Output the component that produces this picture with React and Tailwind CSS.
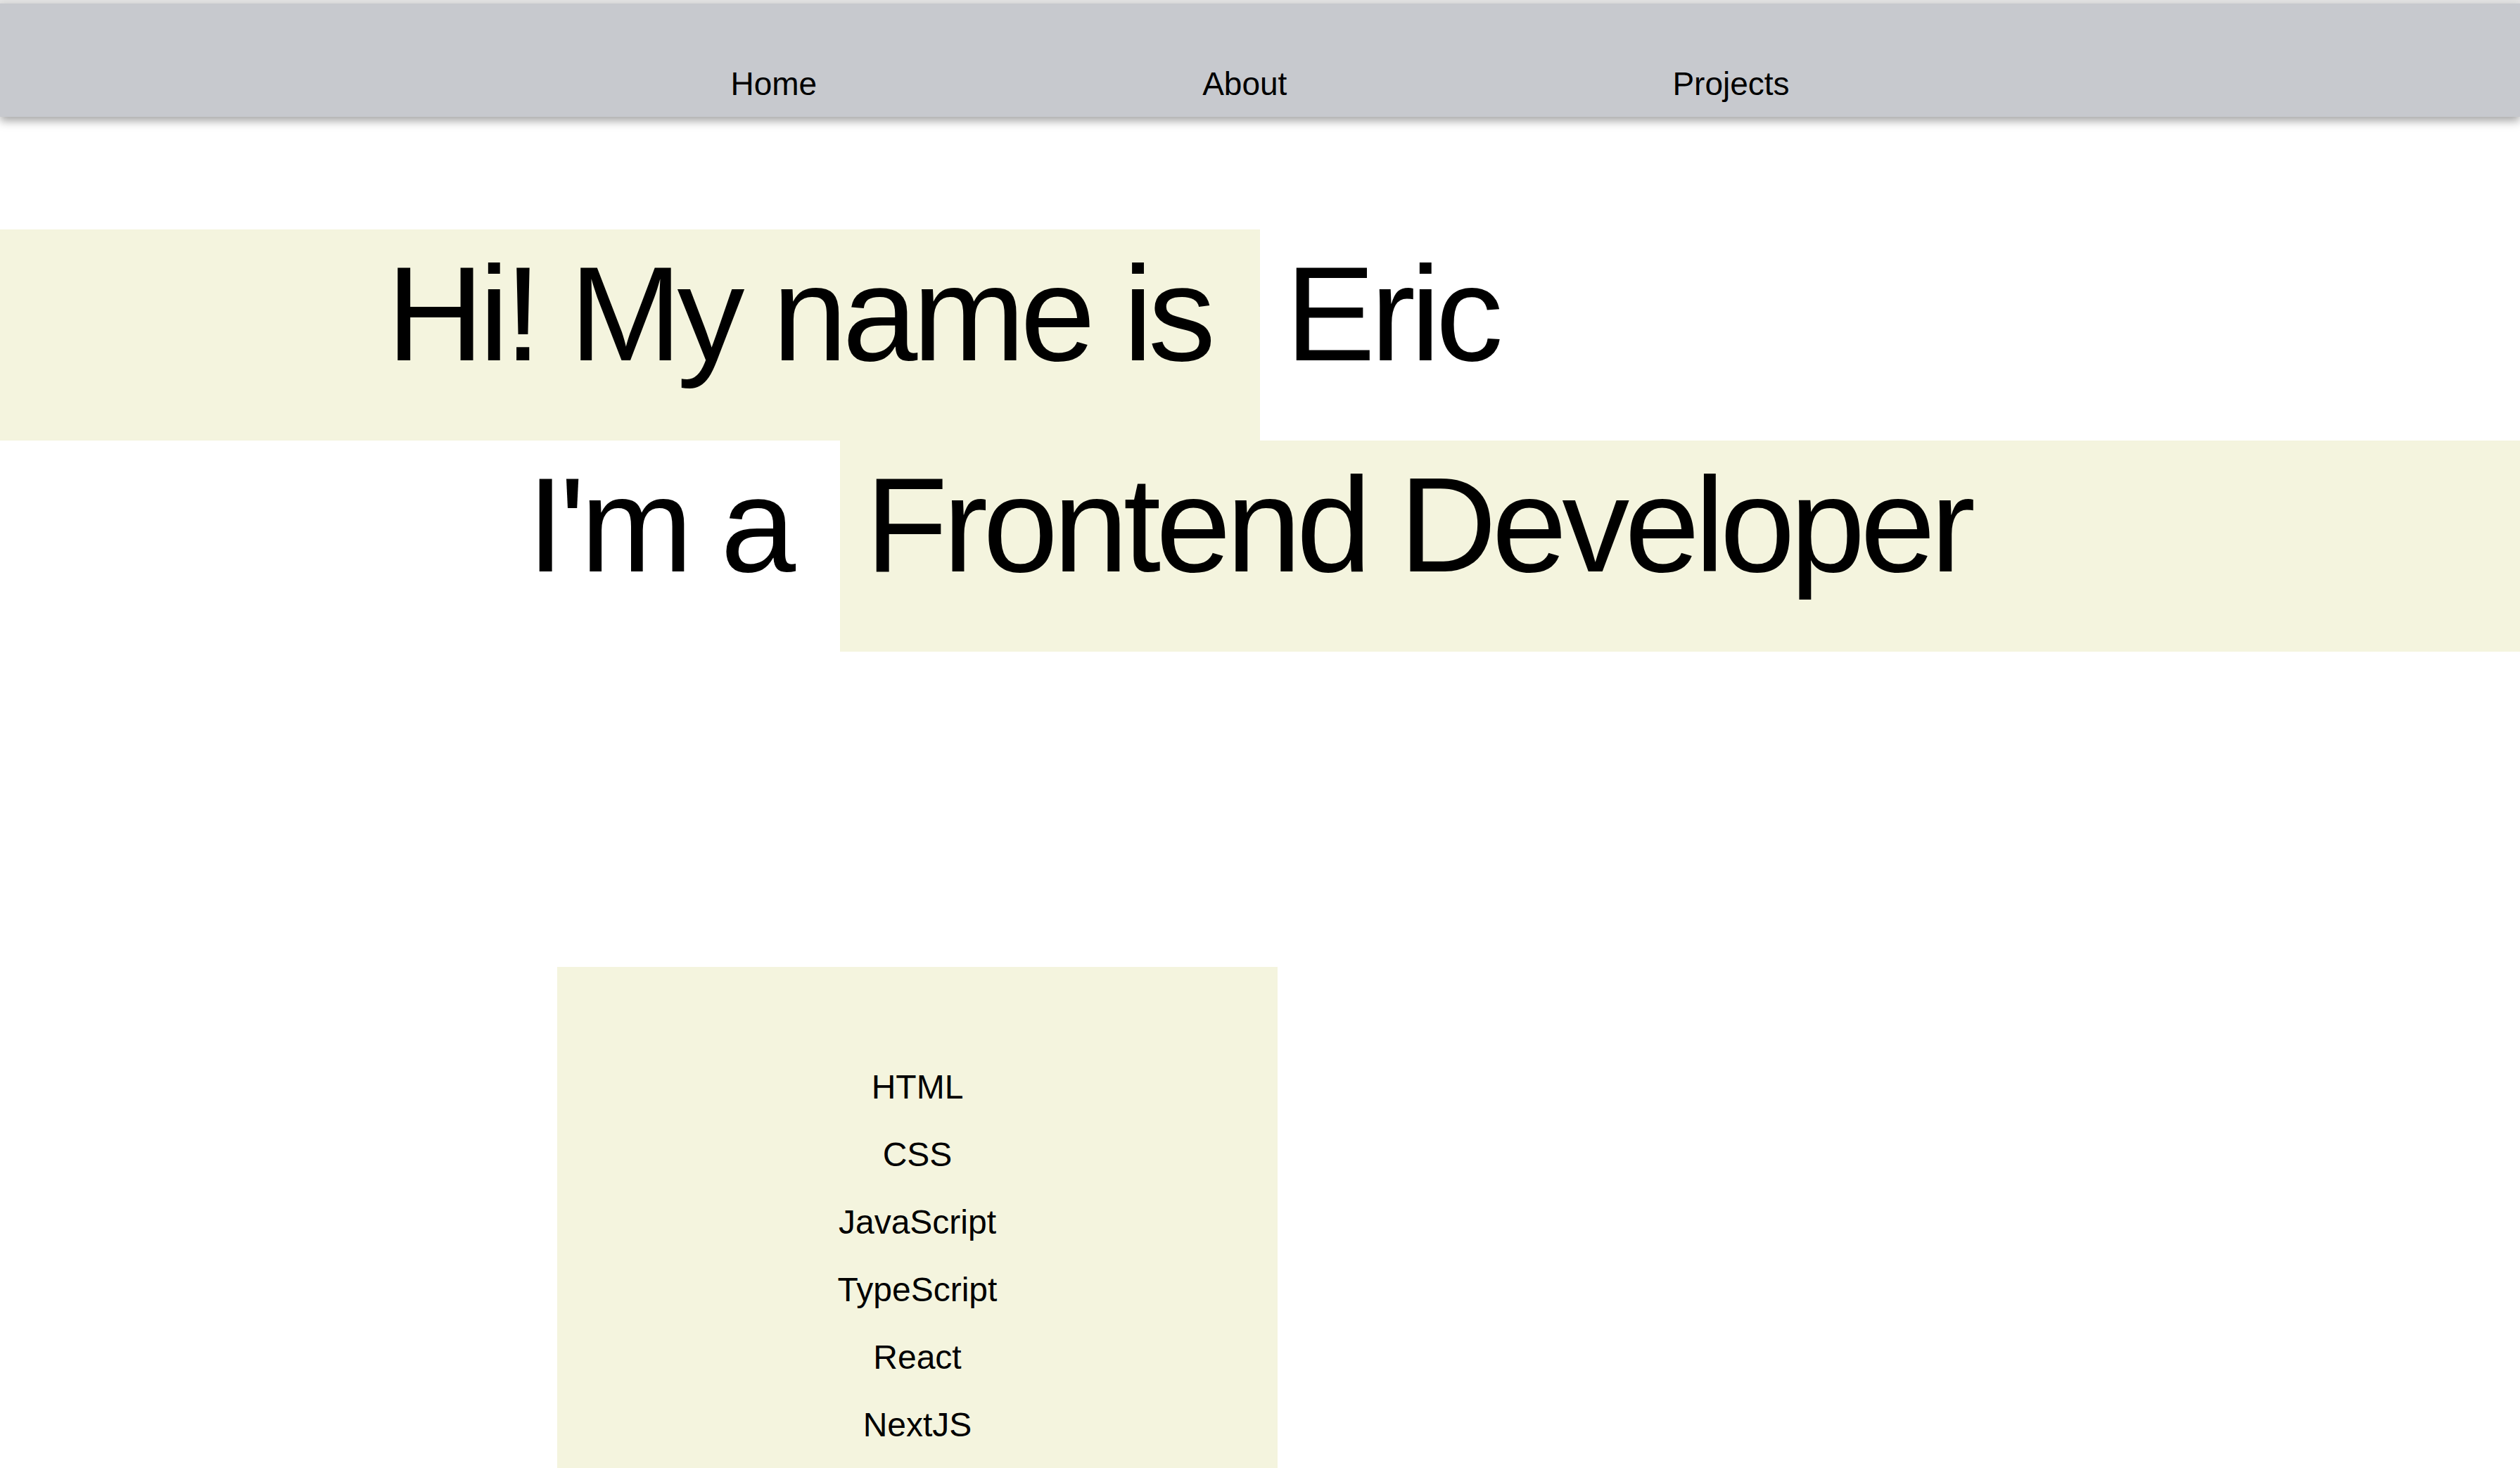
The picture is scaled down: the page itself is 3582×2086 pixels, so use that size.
import React from "react";

const skills = ["HTML", "CSS", "JavaScript", "TypeScript", "React", "NextJS"];

export default function App() {
  return (
    <div className="min-h-screen bg-white text-black font-['Liberation_Sans',Arial,sans-serif]">
      <div className="h-[5px] bg-[#e4e4e4]" />
      <nav className="relative z-10 flex justify-center gap-[548px] bg-[#c7c9ce] pt-[91px] pb-[24px] shadow-[0_6px_12px_rgba(0,0,0,0.35)]">
        <a className="text-[46px] leading-none">Home</a>
        <a className="text-[46px] leading-none">About</a>
        <a className="text-[46px] leading-none">Projects</a>
      </nav>

      <section className="mt-[160px] text-[192px] leading-none tracking-[-7px]">
        <div className="flex h-[300px]">
          <div className="w-1/2 bg-[#f4f4de] pt-[24px] pr-[70px] text-right whitespace-nowrap">
            Hi! My name is
          </div>
          <div className="w-1/2 pt-[24px] pl-[36px] whitespace-nowrap">Eric</div>
        </div>
        <div className="flex h-[300px]">
          <div className="w-1/3 pt-[24px] pr-[70px] text-right whitespace-nowrap">I'm a</div>
          <div className="w-2/3 bg-[#f4f4de] pt-[24px] pl-[36px] whitespace-nowrap">
            Frontend Developer
          </div>
        </div>
      </section>

      <section className="mt-[448px] ml-[792px] w-[1024px] bg-[#f4f4de] pt-[123px] pb-[123px]">
        <ul className="flex flex-col items-center">
          {skills.map((s) => (
            <li key={s} className="text-[48px] leading-[96px]">
              {s}
            </li>
          ))}
        </ul>
      </section>
    </div>
  );
}
